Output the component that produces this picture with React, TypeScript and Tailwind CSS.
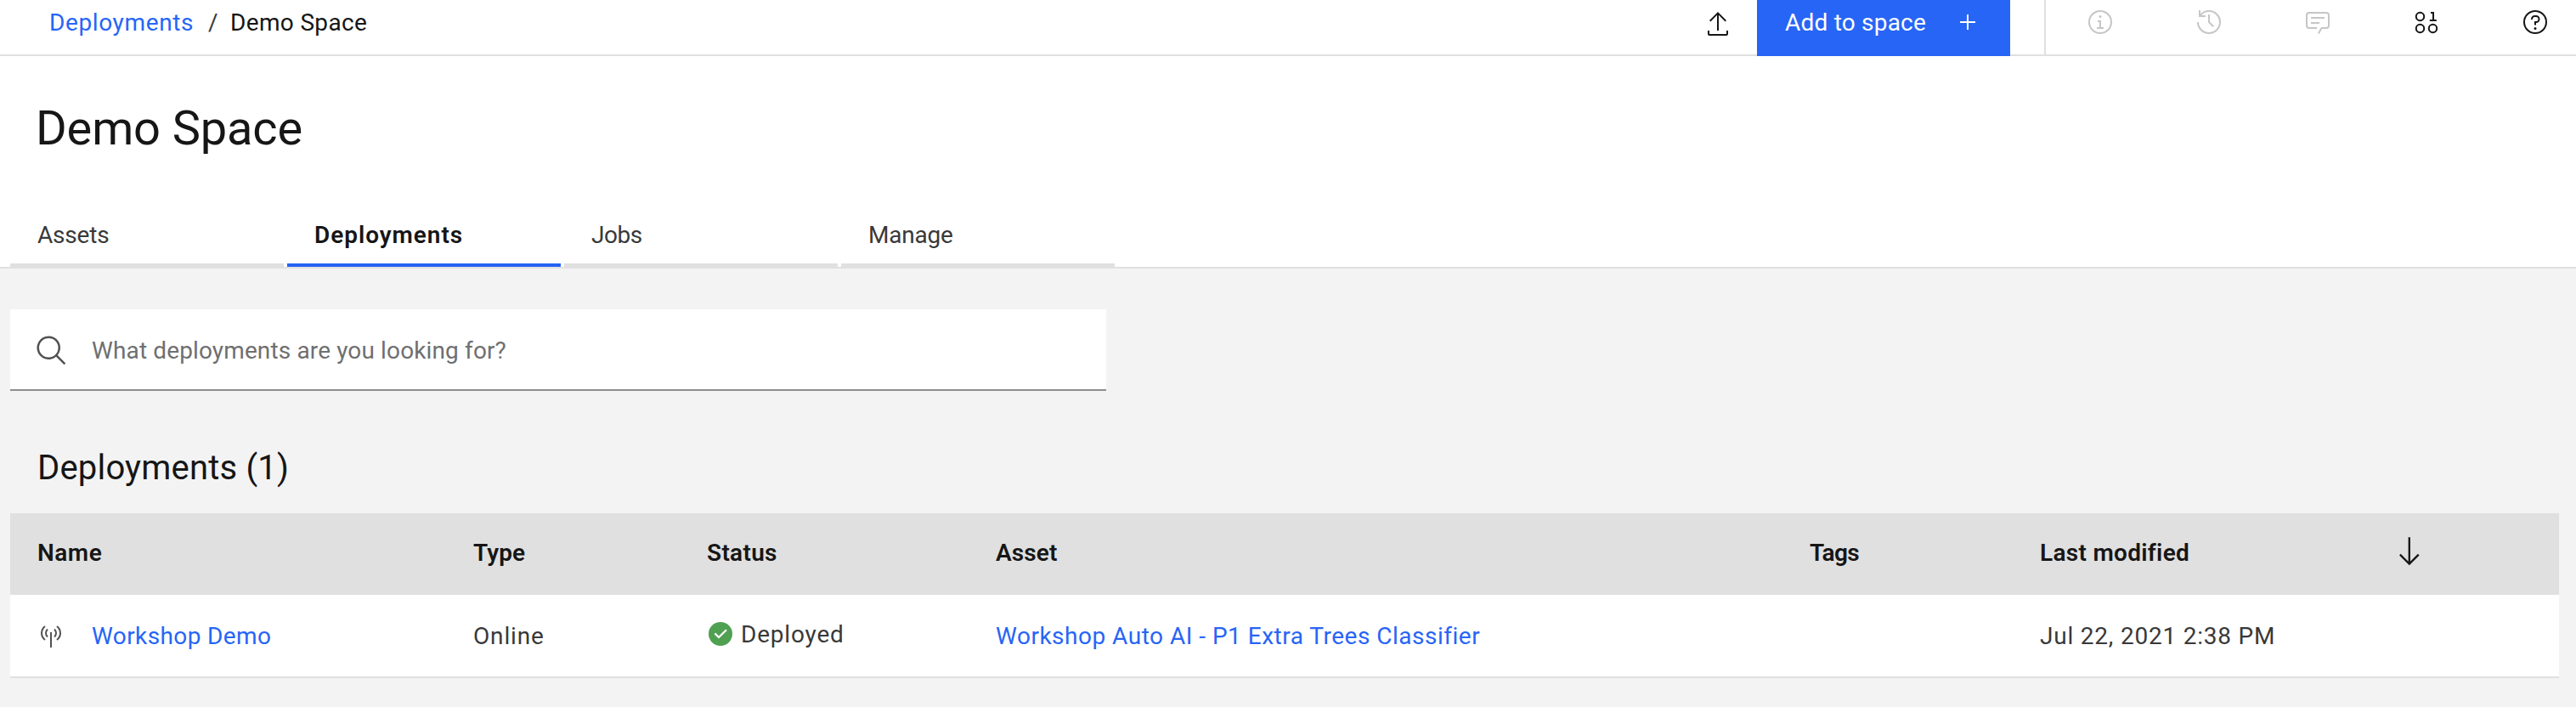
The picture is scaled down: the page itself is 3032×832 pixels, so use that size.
import type { ReactNode } from "react";
import clsx from "clsx";

function Icon({ children, className }: { children: ReactNode; className?: string }) {
  return (
    <svg viewBox="0 0 32 32" fill="currentColor" className={clsx("shrink-0", className ?? "size-8")} aria-hidden="true">
      {children}
    </svg>
  );
}

const ExportIcon = () => (
  <Icon className="mt-1 size-8">
    <path d="M26 24v4H6V24H4v4a2 2 0 0 0 2 2H26a2 2 0 0 0 2-2V24z" />
    <path d="M6 12l1.41 1.41L15 5.83V24h2V5.83l7.59 7.58L26 12 16 2z" />
  </Icon>
);

const AddIcon = () => (
  <Icon>
    <path d="M17 15V7h-2v8H7v2h8v8h2v-8h8v-2z" />
  </Icon>
);

const InfoIcon = () => (
  <Icon>
    <path d="M17 22V14H13v2h2v6H12v2h8V22zM16 8a1.5 1.5 0 1 0 1.5 1.5A1.5 1.5 0 0 0 16 8z" />
    <circle cx="16" cy="16" r="13" fill="none" stroke="currentColor" strokeWidth="2" />
  </Icon>
);

const HistoryIcon = () => (
  <Icon>
    <path d="M20.59 22 15 16.41V7h2v8.58l5 5.01z" />
    <path d="M16 2A13.94 13.94 0 0 0 6 6.23V2H4v8h8V8H7.08A12 12 0 1 1 4 16H2A14 14 0 1 0 16 2z" />
  </Icon>
);

const ChatIcon = () => (
  <Icon>
    <path d="M17.74 30 16 29l4-7h6a2 2 0 0 0 2-2V8a2 2 0 0 0-2-2H6a2 2 0 0 0-2 2v12a2 2 0 0 0 2 2h9v2H6a4 4 0 0 1-4-4V8a4 4 0 0 1 4-4h20a4 4 0 0 1 4 4v12a4 4 0 0 1-4 4h-4.84z" />
    <path d="M8 10h16v2H8zM8 16h10v2H8z" />
  </Icon>
);

const BinaryIcon = () => (
  <Icon>
    <g fill="none" stroke="currentColor" strokeWidth="2">
      <circle cx="8.5" cy="9.5" r="4.7" />
      <circle cx="8.5" cy="23.5" r="4.7" />
      <circle cx="23.5" cy="23.5" r="4.7" />
    </g>
    <path d="M19.8 13H23V6h-2V4h4v9h2.8v2h-8z" />
  </Icon>
);

const HelpIcon = () => (
  <Icon>
    <circle cx="16" cy="16" r="13" fill="none" stroke="currentColor" strokeWidth="2" />
    <circle cx="16" cy="23.5" r="1.5" />
    <path d="M17 8h-1.5a4.49 4.49 0 0 0-4.5 4.5v.5h2v-.5a2.5 2.5 0 0 1 2.5-2.5H17a2.5 2.5 0 0 1 0 5h-2v4.5h2V17a4.5 4.5 0 0 0 0-9z" />
  </Icon>
);

const SearchIcon = () => (
  <Icon className="size-10 text-[#525252]">
    <path d="M29 27.586l-7.552-7.552a11.018 11.018 0 1 0-1.414 1.414L27.586 29zM4 13a9 9 0 1 1 9 9 9.01 9.01 0 0 1-9-9z" />
  </Icon>
);

const SignalIcon = () => (
  <Icon className="size-8 text-[#525252]">
    <path d="M15 12h2v18h-2zM11.33 18.22a7 7 0 0 1 0-10.44l1.34 1.49a5 5 0 0 0 0 7.46zM20.67 18.22l-1.34-1.49a5 5 0 0 0 0-7.46l1.34-1.49a7 7 0 0 1 0 10.44z" />
    <path d="M8.4 21.8a11 11 0 0 1 0-17.6l1.2 1.6a9 9 0 0 0 0 14.4zM23.6 21.8l-1.2-1.6a9 9 0 0 0 0-14.4l1.2-1.6a11 11 0 0 1 0 17.6z" />
  </Icon>
);

const CheckIcon = () => (
  <Icon className="size-8 text-[#50a052]">
    <circle cx="16" cy="16" r="14" />
    <path d="M14 21.6 8.6 16.2l1.6-1.6 3.8 3.8 8.2-8 1.6 1.6z" fill="white" />
  </Icon>
);

const SortIcon = () => (
  <svg viewBox="0 0 16 16" fill="currentColor" className="size-[37.6px]" aria-hidden="true">
    <path d="M12.3 9.3 8.5 13.1V1h-1v12.1L3.7 9.3 3 10l5 5 5-5z" />
  </svg>
);

const tabs = [
  { label: "Assets", tracking: "tracking-[-0.2px]" },
  { label: "Deployments", tracking: "tracking-[0.95px]", active: true },
  { label: "Jobs", tracking: "tracking-[-0.5px]" },
  { label: "Manage", tracking: "tracking-[-0.22px]" },
];

const columns = [
  { label: "Name", tracking: "tracking-[0.5px]" },
  { label: "Type", tracking: "tracking-[0.1px]" },
  { label: "Status", tracking: "tracking-[0.3px]" },
  { label: "Asset", tracking: "tracking-[0.1px]" },
  { label: "Tags", tracking: "tracking-[-0.7px]" },
  { label: "Last modified", tracking: "tracking-[0.3px]" },
];

const rowGrid = "grid grid-cols-[513px_275px_340px_958px_271px_416px_1fr] items-center pl-8";

function Header() {
  return (
    <header className="flex h-[66px] items-start border-b-2 border-[#e0e0e0] bg-white">
      <nav className="flex h-[52px] grow items-center pt-0.5 pl-[58px]">
        <a href="#" className="w-[187px] tracking-[0.62px] text-[#2765f6]">Deployments</a>
        <span className="w-[26px] text-[#393939]">/</span>
        <span className="tracking-[0.34px]">Demo Space</span>
      </nav>
      <div className="flex h-[52px] items-center pr-[30px]">
        <ExportIcon />
      </div>
      <button className="flex h-[66px] w-[298px] items-center justify-between bg-[#2765f6] pr-[34px] pb-[14px] pl-[33px] text-white">
        <span className="pt-0.5 tracking-[0.21px]">Add to space</span>
        <AddIcon />
      </button>
      <div className="ml-10 flex h-16 items-center gap-24 border-l-2 border-[#e0e0e0] pr-8 pb-3 pl-12 text-[#c6c6c6]">
        <InfoIcon />
        <HistoryIcon />
        <ChatIcon />
        <span className="text-[#161616]"><BinaryIcon /></span>
        <span className="text-[#161616]"><HelpIcon /></span>
      </div>
    </header>
  );
}

export default function App() {
  return (
    <div className="flex h-[832px] w-full flex-col overflow-hidden bg-[#f3f3f3] font-[Roboto,sans-serif] text-[28px] leading-9 text-[#161616]">
      <Header />
      <section className="border-b-2 border-[#e0e0e0] bg-white pt-[49px]">
        <h1 className="pl-[42px] text-[56px] leading-[72px] tracking-[-0.15px]">Demo Space</h1>
        <div className="mt-[55px] flex gap-1 pl-3">
          {tabs.map((tab) => (
            <button
              key={tab.label}
              className={clsx(
                "flex h-[72px] w-[322px] items-center border-b-4 pt-0.5 pl-8",
                tab.tracking,
                tab.active ? "border-[#2463f5] font-semibold" : "border-[#e0e0e0] text-[#393939]",
              )}
            >
              {tab.label}
            </button>
          ))}
        </div>
      </section>
      <main className="pt-12 pr-5 pl-3">
        <label className="flex h-24 w-[1290px] items-center gap-[27px] border-b-2 border-[#8d8d8d] bg-white pt-1 pl-[29px]">
          <SearchIcon />
          <input
            type="text"
            placeholder="What deployments are you looking for?"
            className="grow tracking-[0.13px] outline-none placeholder:text-[#6f6f6f]"
          />
        </label>
        <h2 className="mt-[67px] pl-8 text-[40px] leading-[48px] tracking-[0.19px]">Deployments (1)</h2>
        <div className="mt-[29px]">
          <div className={clsx(rowGrid, "h-24 bg-[#e0e0e0] pb-[3px] font-semibold")}>
            {columns.map((column) => (
              <span key={column.label} className={column.tracking}>{column.label}</span>
            ))}
            <span className="-mt-1"><SortIcon /></span>
          </div>
          <div className={clsx(rowGrid, "h-[98px] border-b-2 border-[#e0e0e0] bg-white text-[#393939]")}>
            <div className="flex items-center gap-8">
              <SignalIcon />
              <a href="#" className="pt-0.5 tracking-[0.39px] text-[#2765f6]">Workshop Demo</a>
            </div>
            <span className="pt-0.5 tracking-[0.84px]">Online</span>
            <div className="flex items-center gap-2 pb-1">
              <CheckIcon />
              <span className="pt-0.5 tracking-[0.8px]">Deployed</span>
            </div>
            <a href="#" className="pt-0.5 tracking-[0.5px] text-[#2765f6]">Workshop Auto AI - P1 Extra Trees Classifier</a>
            <span />
            <span className="pt-0.5 tracking-[0.79px]">Jul 22, 2021 2:38 PM</span>
          </div>
        </div>
      </main>
    </div>
  );
}
